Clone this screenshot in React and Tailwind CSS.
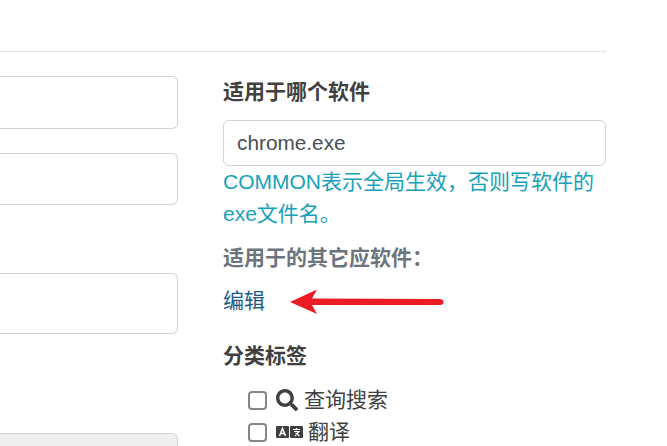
function Search() {
  return (
    <svg width="22" height="22" viewBox="0 0 512 512" className="shrink-0" fill="#3f3f3f">
      <path d="M505 442.7L405.3 343c-4.5-4.5-10.6-7-17-7H372c27.6-35.3 44-79.7 44-128C416 93.1 322.9 0 208 0S0 93.1 0 208s93.1 208 208 208c48.3 0 92.7-16.4 128-44v16.3c0 6.4 2.5 12.5 7 17l99.7 99.7c9.4 9.4 24.6 9.4 33.9 0l28.3-28.3c9.4-9.4 9.4-24.6.1-34zM208 336c-70.7 0-128-57.2-128-128 0-70.7 57.2-128 128-128 70.7 0 128 57.2 128 128 0 70.7-57.2 128-128 128z" />
    </svg>
  );
}
function Translate() {
  return (
    <svg width="27" height="14" viewBox="0 0 27 14" className="shrink-0">
      <rect x="0" y="1" width="13" height="12" rx="1" fill="#3f3f3f" />
      <rect x="14" y="1" width="13" height="12" rx="1" fill="#3f3f3f" />
      <path d="M3.5 11 L6.5 3.5 L9.5 11 M4.6 8.6 H8.4" stroke="#fff" strokeWidth="1.5" fill="none" />
      <path d="M17 4.5 H24 M20.5 3 V5 M18 6.5 H23 L19 11 M19.5 8 L23.5 11" stroke="#fff" strokeWidth="1.2" fill="none" />
    </svg>
  );
}
function Arrow() {
  return (
    <svg width="156" height="26" viewBox="0 0 156 26" className="absolute left-[290px] top-[289px]">
      <path d="M0 13 L27 0.5 L22 9.5 L150 10 Q153.500 10.500 153.500 13 Q153.500 16 150 16 L22 16 L27 25 Z" fill="#ed1c24" />
    </svg>
  );
}
function Box({ h, className = "", bg = "bg-white" }) {
  return <div className={`w-[178px] rounded-r-[6px] border border-l-0 border-[#ced4da] ${bg} ${className}`} style={{ height: h }} />;
}
function Check() {
  return <span className="h-[19px] w-[19px] shrink-0 rounded-[4px] border-2 border-[#858585]" />;
}
export default function App() {
  return (
    <div className="relative h-[446px] w-[667px] overflow-hidden bg-white font-['Liberation_Sans','Noto_Sans_CJK_SC',sans-serif] text-[21px] text-[#404040]">
      <div className="h-[52px] w-[606px] border-b border-[#e5e5e5]" />
      <div className="flex w-[606px] gap-[45px]">
        <div className="flex w-[178px] shrink-0 flex-col pt-[24px]">
          <Box h={53} />
          <Box h={52} className="mt-[24px]" />
          <Box h={61} className="mt-[68px]" />
          <Box h={60} className="mt-[99px]" bg="bg-[#efefef]" />
        </div>
        <div className="flex min-w-0 flex-1 flex-col">
          <div className="mt-[25px] text-[21px] leading-[30px] font-bold text-[#404040]">适用于哪个软件</div>
          <div className="mt-[13px] flex h-[46px] items-center rounded-[6px] border border-[#ced4da] px-[13px] text-[20.8px] text-[#495057]">chrome.exe</div>
          <div className="text-[21px] leading-[32px] text-[#17a2b8]">COMMON表示全局生效，否则写软件的<br />exe文件名。</div>
          <div className="mt-[14px] text-[21px] leading-[28px] font-bold text-[#6c757d]">适用于的其它应软件：</div>
          <div className="mt-[14px] text-[21px] leading-[30px] text-[#1d5a8a]">编辑</div>
          <div className="mt-[25px] text-[21px] leading-[30px] font-bold text-[#404040]">分类标签</div>
          <div className="mt-[13px] flex h-[32px] items-center pl-[25px]">
            <Check />
            <span className="ml-[9px]"><Search /></span>
            <span className="ml-[6px]">查询搜索</span>
          </div>
          <div className="flex h-[32px] items-center pl-[25px]">
            <Check />
            <span className="ml-[9px]"><Translate /></span>
            <span className="ml-[5px]">翻译</span>
          </div>
        </div>
      </div>
      <Arrow />
    </div>
  );
}
